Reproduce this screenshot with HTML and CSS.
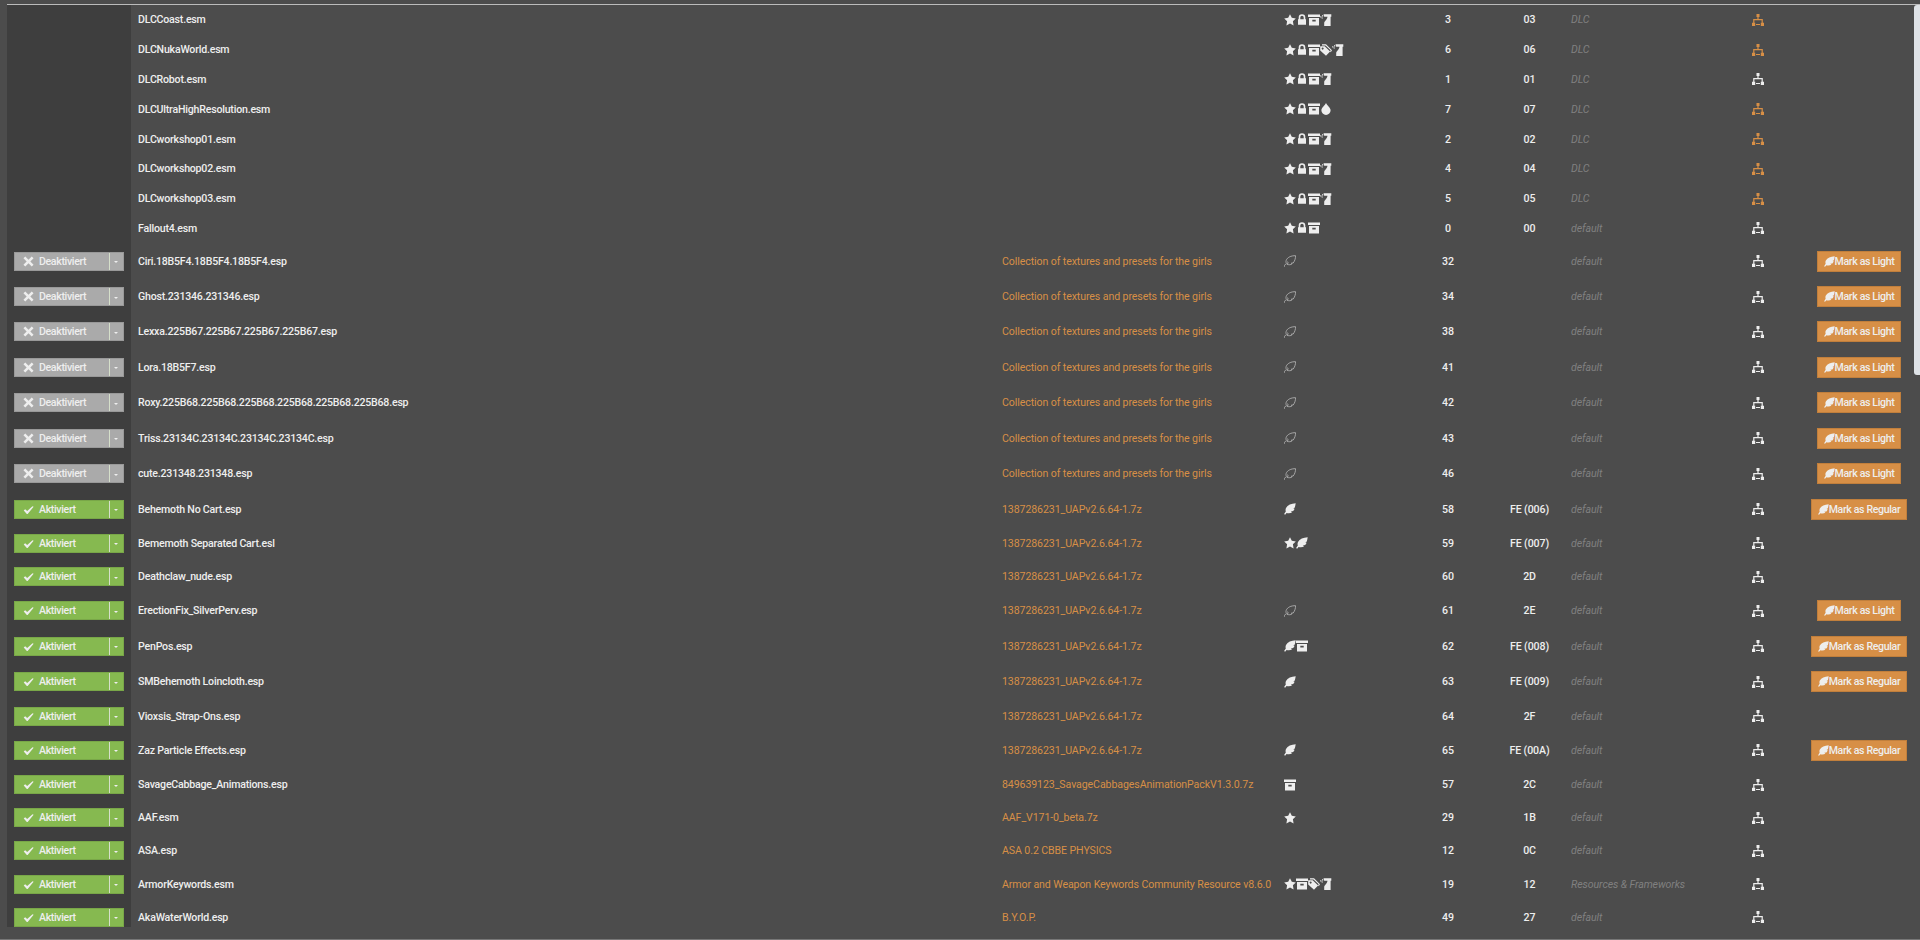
FILE: index.html
```html
<!DOCTYPE html>
<html lang="de">
<head>
    <meta charset="UTF-8">
    <title>Plugins</title>
    <link rel="stylesheet" href="styles.css">
</head>
<body>
    <svg class="icon-defs" aria-hidden="true">
        <symbol id="star" viewBox="0 0 12 12"><path d="M6 .2l1.800 3.600 4 .6-2.900 2.800.7 4.300L6 9.600l-3.600 1.900.7-4.300L.2 4.400l4-.6z"/></symbol>
        <symbol id="lock" viewBox="0 0 12 12"><path fill-rule="evenodd" d="M2 5.200h.7V3.500a3.300 3.300 0 0 1 6.600 0v1.700h.7v5.600H2zM4.300 5.200h3.400V3.500a1.700 1.700 0 0 0-3.400 0z"/></symbol>
        <symbol id="archive" viewBox="0 0 12 12"><path fill-rule="evenodd" d="M0 .5h12v2.600H0zM1 3.900h10v7.600H1zM4.300 5.800v1.700h3.400V5.800z"/></symbol>
        <symbol id="spray" viewBox="0 0 12 12"><path d="M3.500.3h7.800v2.500H4.200zM7.500 2.700h3.100V12H4.200V9.200c0-2.200 2.700-3 3.300-6.500zM2 1.200h1.200v1.200H2zM.2 2.200h1.200v1.200H.2zM1.600 3.400h1.200v1.200H1.600z"/></symbol>
        <symbol id="tags" viewBox="0 0 12 12"><path fill-rule="evenodd" d="M.2 2.200h4.500l5.400 5.300-4.100 4.200L.2 6.500zM2.600 3.500a1 1 0 1 0 .1 0z"/><path d="M2 .3h4l6 5.900-1.200 2.100-.7-.7.5-1.300L5.500 1.500H2z"/></symbol>
        <symbol id="drop" viewBox="0 0 12 12"><path d="M6 0c1.300 2.800 4.600 4.600 4.600 7.300a4.600 4.600 0 0 1-9.200 0C1.400 4.600 4.700 2.800 6 0z"/></symbol>
        <symbol id="feather" viewBox="0 0 12 12"><path d="M11.700.2C7.300.5 3.600 1.900 2 5c-.6 1.200-.5 2.500-.2 3.500L.1 11.100l1 .7 1.500-1.800c1.900.6 4.200.4 5.500-.7L6.800 8.500l2.400-.4c.8-.9 1.200-1.700 1.400-2.400l-1.300-.3 1.500-.9c.4-1.400.6-2.800.9-4.300z"/></symbol>
        <symbol id="feather-outline" viewBox="0 0 12 12"><path fill="none" stroke="currentColor" stroke-width=".8" d="M.5 11.700v-1.400l2-2M2.300 8.300C1.200 5.600 3 3.300 5.300 2 7.300.9 9.500.7 11.600.7c0 2.500-.8 5.200-2.400 7.300H7.400L8 8.900c-1.300 1-3.300 1-5 .4l1.300-1.600L3.100 6.700"/></symbol>
        <symbol id="sitemap" viewBox="0 0 12 12"><path d="M4.500 0h3v3h-.9v1.900h4.200v3.800H12V12H8.800V8.700h.8V6.200H2.400v2.500h.8V12H0V8.700h1.200V4.900h4.200V3h-.9zM4 9.900h4v1.200H4z"/></symbol>
        <symbol id="cross" viewBox="0 0 12 12"><path d="M2.500.5L6 4 9.500.5l2 2L8 6l3.500 3.500-2 2L6 8l-3.500 3.500-2-2L4 6 .5 2.500z"/></symbol>
        <symbol id="check" viewBox="0 0 12 12"><path d="M.8 7l1.500-1.200 2.300 1.700 5.800-5 1.200.5-6.500 7.800h-.9z"/></symbol>
    </svg>

    <div class="table" id="plugins"></div>
    <div class="scrollbar"></div>

    <script src="plugins.js"></script>
</body>
</html>
```
FILE: styles.css
```css
body {
    margin: 0;
    height: 940px;
    overflow: hidden;
    box-sizing: border-box;
    padding: 4px 0 0 7px;
    border-bottom: 1px solid #777;
    background-color: #4c4c4c;
    color: #eee;
    font-family: Roboto, sans-serif;
    font-size: 10.6px;
    letter-spacing: -0.1px;
    white-space: nowrap;
}

.icon-defs {
    display: none;
}

.icon {
    width: 12px;
    height: 12px;
    flex: none;
    fill: currentColor;
}

.table {
    height: 922px;
    overflow: hidden;
    border-top: 1px solid #bbb;
}

.row {
    display: grid;
    grid-template-columns: 124px 864px 282px 130px 82px 81px 146px 84px 118px;
    align-items: center;
    height: 33.15px;
}

.row-fixed {
    height: 29.8px;
}

.row-action {
    height: 35.45px;
}

.status {
    align-self: stretch;
    display: flex;
    align-items: center;
    padding-left: 7px;
    background-color: #3e3e3e;
}

.toggle {
    display: flex;
    width: 109.5px;
    height: 19px;
    box-sizing: border-box;
    background-color: #86b950;
    border: 1px solid #79a748;
    font-weight: 500;
    letter-spacing: -0.36px;
}

.toggle-off {
    background-color: #aaa;
    border-color: #999;
}

.toggle-label {
    flex: 1;
    display: flex;
    align-items: center;
    gap: 5px;
    padding-left: 8px;
}

.toggle-label .icon {
    width: 11px;
    height: 11px;
}

.toggle-arrow {
    width: 13px;
    display: flex;
    align-items: center;
    justify-content: center;
    border-left: 1px solid #d5dfca;
}

.toggle-arrow::after {
    content: "";
    margin-top: 2px;
    border: 2px solid transparent;
    border-top-color: #eee;
    border-bottom: 0;
}

.name {
    padding-left: 7px;
    font-weight: 500;
    letter-spacing: -0.21px;
}

.mod {
    padding-left: 7px;
    color: #d78f46;
}

.flags {
    display: flex;
    padding-left: 7px;
}

.flags .icon-feather-outline {
    color: #bbb;
}

.order,
.index {
    font-weight: 500;
    text-align: center;
}

.group {
    padding-left: 1px;
    color: #808080;
    font-style: italic;
}

.deps {
    text-align: center;
    line-height: 0;
}

.deps-warn {
    color: #d78f46;
}

.action {
    display: flex;
    justify-content: center;
}

.mark {
    display: flex;
    align-items: center;
    height: 21px;
    box-sizing: border-box;
    padding: 0 6px;
    background-color: #d78f46;
    border: 1px solid #c17f3c;
    font-weight: 500;
    letter-spacing: -0.36px;
}

.mark .icon {
    width: 11px;
    height: 11px;
}

.scrollbar {
    position: absolute;
    top: 5px;
    right: 0;
    width: 6px;
    height: 370px;
    border-radius: 3px 0 0 3px;
    background-color: #dee2e6;
}
```
FILE: plugins.js
```js
const textures = 'Collection of textures and presets for the girls';
const uap = '1387286231_UAPv2.6.64-1.7z';

// state, name, mod, flags, load order, mod index, group, mark button, dependency warning
const plugins = [
    ['', 'DLCCoast.esm', '', 'star lock archive spray', 3, '03', 'DLC', '', true],
    ['', 'DLCNukaWorld.esm', '', 'star lock archive tags spray', 6, '06', 'DLC', '', true],
    ['', 'DLCRobot.esm', '', 'star lock archive spray', 1, '01', 'DLC', ''],
    ['', 'DLCUltraHighResolution.esm', '', 'star lock archive drop', 7, '07', 'DLC', '', true],
    ['', 'DLCworkshop01.esm', '', 'star lock archive spray', 2, '02', 'DLC', '', true],
    ['', 'DLCworkshop02.esm', '', 'star lock archive spray', 4, '04', 'DLC', '', true],
    ['', 'DLCworkshop03.esm', '', 'star lock archive spray', 5, '05', 'DLC', '', true],
    ['', 'Fallout4.esm', '', 'star lock archive', 0, '00', 'default', ''],
    ['off', 'Ciri.18B5F4.18B5F4.18B5F4.esp', textures, 'feather-outline', 32, '', 'default', 'Light'],
    ['off', 'Ghost.231346.231346.esp', textures, 'feather-outline', 34, '', 'default', 'Light'],
    ['off', 'Lexxa.225B67.225B67.225B67.225B67.esp', textures, 'feather-outline', 38, '', 'default', 'Light'],
    ['off', 'Lora.18B5F7.esp', textures, 'feather-outline', 41, '', 'default', 'Light'],
    ['off', 'Roxy.225B68.225B68.225B68.225B68.225B68.225B68.esp', textures, 'feather-outline', 42, '', 'default', 'Light'],
    ['off', 'Triss.23134C.23134C.23134C.23134C.esp', textures, 'feather-outline', 43, '', 'default', 'Light'],
    ['off', 'cute.231348.231348.esp', textures, 'feather-outline', 46, '', 'default', 'Light'],
    ['on', 'Behemoth No Cart.esp', uap, 'feather', 58, 'FE (006)', 'default', 'Regular'],
    ['on', 'Bememoth Separated Cart.esl', uap, 'star feather', 59, 'FE (007)', 'default', ''],
    ['on', 'Deathclaw_nude.esp', uap, '', 60, '2D', 'default', ''],
    ['on', 'ErectionFix_SilverPerv.esp', uap, 'feather-outline', 61, '2E', 'default', 'Light'],
    ['on', 'PenPos.esp', uap, 'feather archive', 62, 'FE (008)', 'default', 'Regular'],
    ['on', 'SMBehemoth Loincloth.esp', uap, 'feather', 63, 'FE (009)', 'default', 'Regular'],
    ['on', 'Vioxsis_Strap-Ons.esp', uap, '', 64, '2F', 'default', ''],
    ['on', 'Zaz Particle Effects.esp', uap, 'feather', 65, 'FE (00A)', 'default', 'Regular'],
    ['on', 'SavageCabbage_Animations.esp', '849639123_SavageCabbagesAnimationPackV1.3.0.7z', 'archive', 57, '2C', 'default', ''],
    ['on', 'AAF.esm', 'AAF_V171-0_beta.7z', 'star', 29, '1B', 'default', ''],
    ['on', 'ASA.esp', 'ASA 0.2 CBBE PHYSICS', '', 12, '0C', 'default', ''],
    ['on', 'ArmorKeywords.esm', 'Armor and Weapon Keywords Community Resource v8.6.0', 'star archive tags spray', 19, '12', 'Resources & Frameworks', ''],
    ['on', 'AkaWaterWorld.esp', 'B.Y.O.P.', '', 49, '27', 'default', '']
];

function icon(name) {
    return `<svg class="icon icon-${name}"><use href="#${name}"/></svg>`;
}

function toggle(state) {
    if (!state) return '';
    const on = state === 'on';
    return `<div class="toggle toggle-${state}">
        <span class="toggle-label">${icon(on ? 'check' : 'cross')}${on ? 'Aktiviert' : 'Deaktiviert'}</span>
        <span class="toggle-arrow"></span>
    </div>`;
}

document.getElementById('plugins').innerHTML = plugins.map(([state, name, mod, flags, order, index, group, mark, warn]) => {
    const rowType = !state ? 'row-fixed' : mark ? 'row-action' : '';
    return `<div class="row ${rowType}">
        <div class="status">${toggle(state)}</div>
        <div class="name">${name}</div>
        <div class="mod">${mod}</div>
        <div class="flags">${flags.split(' ').filter(Boolean).map(icon).join('')}</div>
        <div class="order">${order}</div>
        <div class="index">${index}</div>
        <div class="group">${group.replace('&', '&amp;')}</div>
        <div class="deps ${warn ? 'deps-warn' : ''}">${icon('sitemap')}</div>
        <div class="action">${mark ? `<div class="mark">${icon('feather')}Mark as ${mark}</div>` : ''}</div>
    </div>`;
}).join('');
```
